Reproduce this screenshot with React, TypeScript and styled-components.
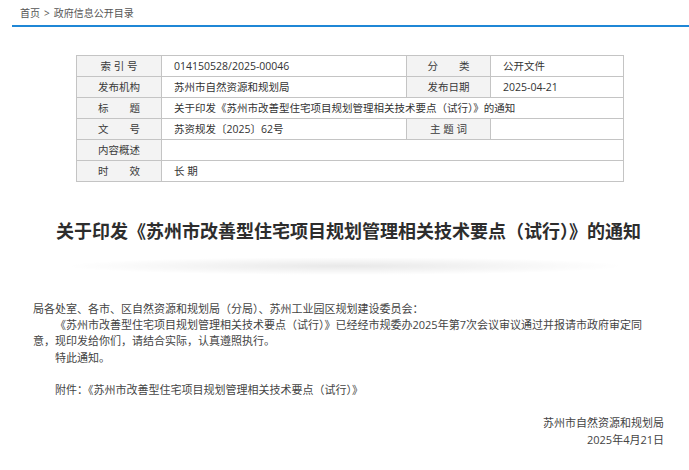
import React from 'react'
import styled, { createGlobalStyle } from 'styled-components'

const GlobalStyle = createGlobalStyle`
    html, body {
        margin: 0;
        padding: 0;
        background: #ffffff;
    }
    body {
        font-family: "Open Sans", "Noto Sans CJK SC", sans-serif;
        color: #333333;
    }
`

const Page = styled.div`
    width: 689px;
    height: 470px;
    overflow: hidden;
`

const Breadcrumb = styled.nav`
    margin-left: 12px;
    height: 25px;
    padding-left: 8px;
    display: flex;
    align-items: center;
    border-bottom: 2px solid #1f87d6;
    font-size: 10px;
    color: #555555;
    gap: 4px;
`

const Crumb = styled.a`
    color: #555555;
    text-decoration: none;
`

const InfoTable = styled.table`
    margin: 28px 0 0 76px;
    width: 547px;
    border-collapse: collapse;
    table-layout: fixed;
    font-size: 10.5px;
    border: 1px solid #a9a9a9;
    td {
        height: 20px;
        padding: 0 0 0 12px;
        border: 1px solid #c4c4c4;
        line-height: 20px;
        white-space: nowrap;
        overflow: hidden;
    }
`

const Label = styled.td`
    && {
        padding: 0;
        background: #f3f3f3;
        text-align: center;
        color: #3a3a3a;
    }
`

const Heading = styled.h1`
    margin: 36px 0 0 0;
    padding-left: 8px;
    text-align: center;
    font-size: 18px;
    line-height: 26px;
    font-weight: bold;
    color: #2d2d2d;
`

const Shadow = styled.div`
    margin: 14px auto 0;
    width: 560px;
    height: 20px;
    background: radial-gradient(ellipse 50% 45% at 50% 40%, rgba(0, 0, 0, 0.09), rgba(0, 0, 0, 0) 100%);
`

const Article = styled.article`
    margin-top: 23px;
    padding: 0 25px 0 33px;
    font-size: 11px;
    line-height: 16.2px;
    color: #444444;
`

const Para = styled.p<{ $indent?: boolean; $gap?: boolean }>`
    margin: ${p => (p.$gap ? '16.2px' : '0')} 14px 0 0;
    text-indent: ${p => (p.$indent ? '2em' : '0')};
`

const Signature = styled.div`
    margin-top: 16px;
    text-align: right;
    line-height: 17px;
    font-size: 11px;
    color: #444444;
`

type Cell = { label: string; value: string; span?: boolean }

const rows: Cell[][] = [
    [
        { label: '索 引 号', value: '014150528/2025-00046' },
        { label: '分\u3000\u3000类', value: '公开文件' },
    ],
    [
        { label: '发布机构', value: '苏州市自然资源和规划局' },
        { label: '发布日期', value: '2025-04-21' },
    ],
    [{ label: '标\u3000\u3000题', value: '关于印发《苏州市改善型住宅项目规划管理相关技术要点（试行）》的通知', span: true }],
    [
        { label: '文\u3000\u3000号', value: '苏资规发〔2025〕62号' },
        { label: '主 题 词', value: '' },
    ],
    [{ label: '内容概述', value: '', span: true }],
    [{ label: '时\u3000\u3000效', value: '长 期', span: true }],
]

const App = () => {
    return (
        <>
            <GlobalStyle />
            <Page>
                <Breadcrumb>
                    <Crumb href='#'>首页</Crumb>
                    <span>&gt;</span>
                    <Crumb href='#'>政府信息公开目录</Crumb>
                </Breadcrumb>
                <InfoTable>
                    <colgroup>
                        <col style={{ width: 85 }} />
                        <col style={{ width: 245 }} />
                        <col style={{ width: 84 }} />
                        <col style={{ width: 133 }} />
                    </colgroup>
                    <tbody>
                        {rows.map((row, i) => (
                            <tr key={i}>
                                {row.map(cell => (
                                    <React.Fragment key={cell.label}>
                                        <Label>{cell.label}</Label>
                                        <td colSpan={cell.span ? 3 : 1}>{cell.value}</td>
                                    </React.Fragment>
                                ))}
                            </tr>
                        ))}
                    </tbody>
                </InfoTable>
                <Heading>关于印发《苏州市改善型住宅项目规划管理相关技术要点（试行）》的通知</Heading>
                <Shadow />
                <Article>
                    <Para>局各处室、各市、区自然资源和规划局（分局）、苏州工业园区规划建设委员会：</Para>
                    <Para $indent>
                        《苏州市改善型住宅项目规划管理相关技术要点（试行）》已经经市规委办2025年第7次会议审议通过并报请市政府审定同意，现印发给你们，请结合实际，认真遵照执行。
                    </Para>
                    <Para $indent>特此通知。</Para>
                    <Para $indent $gap>附件：《苏州市改善型住宅项目规划管理相关技术要点（试行）》</Para>
                    <Signature>
                        <div>苏州市自然资源和规划局</div>
                        <div>2025年4月21日</div>
                    </Signature>
                </Article>
            </Page>
        </>
    )
}

export default App
